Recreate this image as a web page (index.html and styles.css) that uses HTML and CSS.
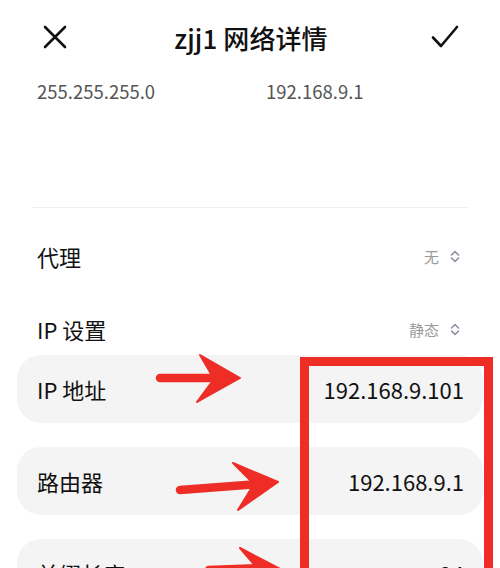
FILE: index.html
```html
<!DOCTYPE html>
<html lang="zh">
<head>
<meta charset="utf-8">
<link rel="stylesheet" href="styles.css">
</head>
<body>
<div class="page">
  <header class="topbar">
    <svg class="icon" width="24" height="24" viewBox="0 0 24 24"><path d="M2 2 L22 22 M22 2 L2 22" stroke="#111" stroke-width="2.6" stroke-linecap="round" fill="none"/></svg>
    <h1 class="title">zjj1 网络详情</h1>
    <svg class="icon" width="28" height="24" viewBox="0 0 28 24"><path d="M2 12.5 L10 21 L26 2" stroke="#111" stroke-width="2.6" stroke-linecap="round" stroke-linejoin="round" fill="none"/></svg>
  </header>
  <div class="info-row">
    <span class="info-a">255.255.255.0</span>
    <span class="info-b">192.168.9.1</span>
  </div>
  <div class="divider"></div>
  <div class="setting first">
    <span class="label">代理</span>
    <span class="select">无<svg width="10" height="13" viewBox="0 0 10 13"><path d="M1.5 5 L5 1.5 L8.5 5 M1.5 8 L5 11.5 L8.5 8" stroke="#8c90a0" stroke-width="1.6" fill="none" stroke-linecap="round" stroke-linejoin="round"/></svg></span>
  </div>
  <div class="setting second">
    <span class="label">IP 设置</span>
    <span class="select">静态<svg width="10" height="13" viewBox="0 0 10 13"><path d="M1.5 5 L5 1.5 L8.5 5 M1.5 8 L5 11.5 L8.5 8" stroke="#8c90a0" stroke-width="1.6" fill="none" stroke-linecap="round" stroke-linejoin="round"/></svg></span>
  </div>
  <div class="cards">
    <div class="card"><span class="label">IP 地址</span><span class="value">192.168.9.101</span></div>
    <div class="card"><span class="label">路由器</span><span class="value">192.168.9.1</span></div>
    <div class="card"><span class="label">前缀长度</span><span class="value">24</span></div>
  </div>
  <div class="redbox"></div>
  <svg class="arrows" width="500" height="620" viewBox="0 0 500 620">
    <g fill="#ee2d27" stroke="#ee2d27" stroke-linecap="round" stroke-linejoin="round">
      <line x1="160" y1="378" x2="222" y2="378" stroke-width="8.5"/>
      <polygon points="200,355 240,378 197,402 214,379" stroke-width="2"/>
      <line x1="180" y1="490" x2="258" y2="484" stroke-width="8.5"/>
      <polygon points="233,463 278,482 238,510 254,484" stroke-width="2"/>
      <line x1="209" y1="570" x2="262" y2="568" stroke-width="8.5"/>
      <polygon points="240,548 282,570 244,596 258,569" stroke-width="2"/>
    </g>
  </svg>
</div>
</body>
</html>
```
FILE: styles.css
```css
* { box-sizing: border-box; margin: 0; padding: 0; }
html, body { background: #fff; }
body {
  font-family: "Noto Sans CJK SC", "Noto Sans", sans-serif;
  color: #111;
  overflow: hidden;
}
.page { position: relative; width: 500px; height: 640px; }
.topbar {
  height: 74px;
  display: flex;
  align-items: center;
  justify-content: space-between;
  padding: 0 41px 0 43px;
}
.title {
  font-size: 26px;
  font-weight: 500;
  color: #111;
  letter-spacing: 0.1px;
  margin-left: 4px;
}
.icon { display: block; }
.info-row {
  height: 34px;
  display: flex;
  align-items: center;
  padding-left: 37px;
  font-size: 18.5px;
  color: #555;
}
.info-a { width: 229px; }
.divider {
  margin: 99px 32px 0;
  height: 1px;
  background: #efefef;
}
.setting {
  height: 48px;
  display: flex;
  align-items: center;
  justify-content: space-between;
  padding: 0 40px 0 37px;
}
.setting.first { margin-top: 24px; }
.setting.second { margin-top: 25px; }
.label { font-size: 22px; color: #111; }
.select {
  display: flex;
  align-items: center;
  gap: 11px;
  font-size: 15px;
  color: #9a9a9a;
}
.select svg { display: block; }
.cards {
  margin: 2px 17px 0;
  display: flex;
  flex-direction: column;
  gap: 24px;
}
.card {
  height: 68px;
  border-radius: 24px;
  background: #f4f4f4;
  display: flex;
  align-items: center;
  justify-content: space-between;
  padding: 0 19px 0 20px;
}
.value { font-size: 22px; color: #111; }
.redbox {
  position: absolute;
  left: 300px;
  top: 357px;
  width: 193px;
  height: 260px;
  border: 9px solid #ee2d27;
}
.arrows { position: absolute; left: 0; top: 0; }
```
